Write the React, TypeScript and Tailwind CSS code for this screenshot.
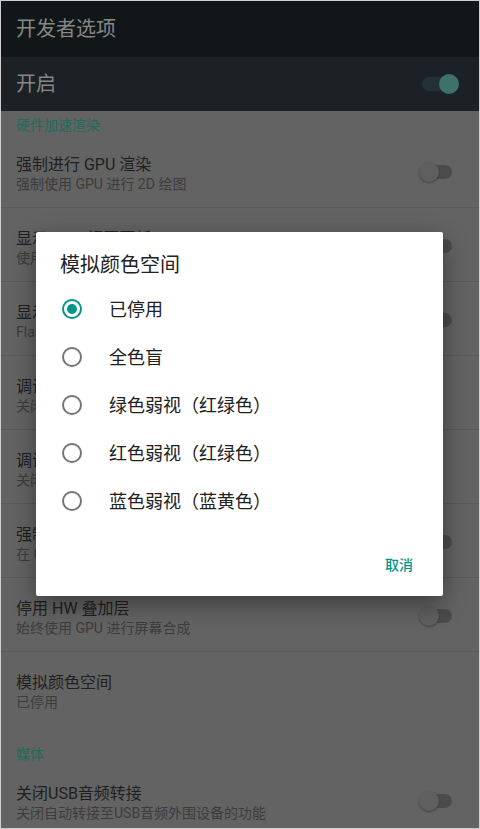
import { useState } from "react";

type Row = { title: string; summary: string; toggle?: boolean };

const GPU_ROWS: Row[] = [
  { title: "强制进行 GPU 渲染", summary: "强制使用 GPU 进行 2D 绘图", toggle: true },
  { title: "显示 GPU 视图更新", summary: "使用 GPU 进行绘图时闪烁显示窗口中的视图", toggle: true },
  { title: "显示硬件层更新", summary: "Flash hardware layers green when they update", toggle: true },
  { title: "调试 GPU 过度绘制", summary: "关闭" },
  { title: "调试非矩形剪裁操作", summary: "关闭" },
  { title: "强制启用 4x MSAA", summary: "在 OpenGL ES 2.0 应用中启用 4x MSAA", toggle: true },
  { title: "停用 HW 叠加层", summary: "始终使用 GPU 进行屏幕合成", toggle: true },
];

const OPTIONS = ["已停用", "全色盲", "绿色弱视（红绿色）", "红色弱视（红绿色）", "蓝色弱视（蓝黄色）"];

// 背景里的开关（已被遮罩压暗）
function DimSwitch({ on = false }: { on?: boolean }) {
  return (
    <div className="relative h-5 w-[40px] shrink-0">
      <div
        className={`absolute top-[3px] left-[3px] h-[14px] w-[30px] rounded-full ${
          on ? "bg-[#243134]" : "bg-[#4b4b4b]"
        }`}
      />
      <div
        className={`absolute top-0 h-5 w-5 rounded-full ${
          on
            ? "left-[20px] bg-[#3e7268]"
            : "left-0 bg-[#5f5f5f] shadow-[0_1px_2px_rgba(0,0,0,0.35)]"
        }`}
      />
    </div>
  );
}

function PrefRow({ row, last }: { row: Row; last?: boolean }) {
  return (
    <div
      className={`flex h-[74px] items-start justify-between pt-[21px] pl-[15px] pr-[20px] ${
        last ? "" : "border-b border-[#595959]"
      }`}
    >
      <div className="min-w-0 whitespace-nowrap">
        <div className="text-[16px] leading-[20px] text-[#1f1f1f]">{row.title}</div>
        <div className="text-[14px] leading-[18px] text-[#3c3c3c]">{row.summary}</div>
      </div>
      {row.toggle && (
        <div className="mt-[7px]">
          <DimSwitch />
        </div>
      )}
    </div>
  );
}

function Radio({ checked }: { checked: boolean }) {
  return (
    <span
      className={`flex h-5 w-5 shrink-0 items-center justify-center rounded-full border-2 ${
        checked ? "border-[#009688]" : "border-[#757575]"
      }`}
    >
      {checked && <span className="h-[10px] w-[10px] rounded-full bg-[#009688]" />}
    </span>
  );
}

export default function App() {
  const [selected, setSelected] = useState(0);

  return (
    <div className="relative h-[829px] w-[480px] overflow-hidden border border-[#cfcfcf] bg-[#636363] font-['Roboto','Noto_Sans_CJK_SC',sans-serif]">
      {/* 标题栏 */}
      <div className="flex h-[56px] items-center bg-[#111619] pl-[15px] text-[20px] text-[#878787]">
        开发者选项
      </div>
      <div className="flex h-[54px] items-center justify-between bg-[#1b2125] pl-[15px] pr-[20px] text-[20px] text-[#878787]">
        <span>开启</span>
        <DimSwitch on />
      </div>

      <div className="h-[23px] pt-[6px] pl-[15px] text-[14px] leading-[16px] text-[#1f6b5e]">
        硬件加速渲染
      </div>
      {GPU_ROWS.map((row) => (
        <PrefRow key={row.title} row={row} />
      ))}
      <PrefRow row={{ title: "模拟颜色空间", summary: "已停用" }} last />

      <div className="pt-[20px] pb-[1px] pl-[15px] text-[14px] leading-[16px] text-[#1f6b5e]">媒体</div>
      <PrefRow row={{ title: "关闭USB音频转接", summary: "关闭自动转接至USB音频外围设备的功能", toggle: true }} last />

      {/* 对话框 */}
      <div className="absolute top-[231px] left-[35px] flex h-[364px] w-[407px] flex-col rounded-[2px] bg-white shadow-[0_8px_24px_rgba(0,0,0,0.4)]">
        <div className="pt-[21px] pb-[8px] pl-[24px] text-[20px] leading-[24px] text-[#212121]">模拟颜色空间</div>
        {OPTIONS.map((label, i) => (
          <button
            key={label}
            type="button"
            onClick={() => setSelected(i)}
            className="flex h-[48px] items-center gap-[27px] pl-[26px] text-left text-[18px] text-[#212121]"
          >
            <Radio checked={selected === i} />
            <span>{label}</span>
          </button>
        ))}
        <div className="mt-[22px] flex h-[36px] items-center justify-end pr-[30px]">
          <button type="button" className="text-[14px] font-medium text-[#009688]">
            取消
          </button>
        </div>
      </div>
    </div>
  );
}
